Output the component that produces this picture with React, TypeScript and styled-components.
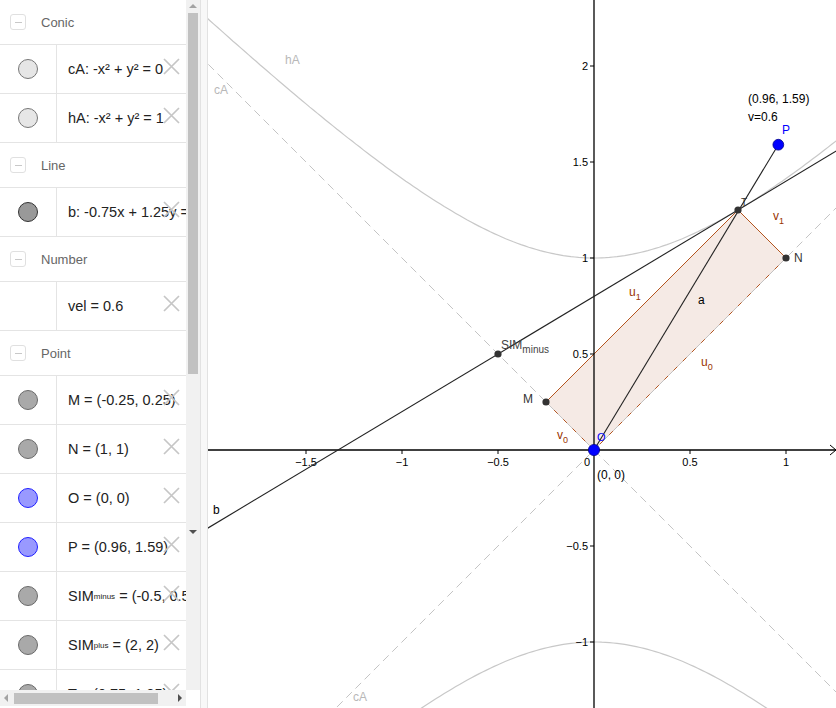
import React from 'react';
import styled, { createGlobalStyle } from 'styled-components';

const GlobalStyle = createGlobalStyle`
  html, body { margin: 0; padding: 0; background: #fff; }
  body { font-family: "Liberation Sans", Arial, sans-serif; }
`;

const Shell = styled.div`
  display: flex;
  width: 836px;
  height: 708px;
  overflow: hidden;
  background: #fff;
`;

// algebra view: content + scrollbars as a grid
const AlgebraPanel = styled.div`
  flex: none;
  width: 200px;
  display: grid;
  grid-template-columns: 186px 14px;
  grid-template-rows: 690px 18px;
`;

const ListArea = styled.div`
  overflow: hidden;
  display: flex;
  flex-direction: column;
`;

const VScroll = styled.div`
  background: #f1f1f1;
  display: flex;
  flex-direction: column;
  align-items: center;
  padding-top: 4px;
`;

const VThumb = styled.div`
  width: 10px;
  height: 361px;
  margin-top: 5px;
  background: #c1c1c1;
`;

const VSpacer = styled.div`
  flex: 1;
`;

const HScroll = styled.div`
  background: #f1f1f1;
  display: flex;
  align-items: center;
  padding: 0 4px;
  height: 16px;
`;

const HThumb = styled.div`
  width: 144px;
  height: 11px;
  margin-left: 6px;
  background: #c1c1c1;
`;

const Corner = styled.div`
  background: #fff;
`;

const Arrow = styled.div<{ dir: 'up' | 'down' | 'left' | 'right' }>`
  width: 0;
  height: 0;
  border-style: solid;
  border-color: transparent;
  ${({ dir }) =>
    dir === 'up'
      ? 'border-width: 0 4px 4px 4px; border-bottom-color: #a3a3a3;'
      : dir === 'down'
      ? 'border-width: 4px 4px 0 4px; border-top-color: #505050;'
      : dir === 'left'
      ? 'border-width: 4px 4px 4px 0; border-right-color: #a3a3a3;'
      : 'border-width: 4px 0 4px 4px; border-left-color: #505050;'}
`;

const Divider = styled.div`
  flex: none;
  width: 6px;
  background: #f8f8f8;
  border-left: 1px solid #e2e2e2;
  border-right: 1px solid #e2e2e2;
`;

const GraphView = styled.div`
  flex: 1;
  height: 708px;
  overflow: hidden;
`;

const SectionHeader = styled.div`
  flex: none;
  height: 44px;
  display: flex;
  align-items: center;
  border-bottom: 1px solid #e4e4e4;
  font-size: 13px;
  color: #666;
`;

const Collapse = styled.div`
  width: 14px;
  height: 14px;
  margin: 0 15px 0 10px;
  border: 1px solid #e0e0e0;
  border-radius: 3px;
  display: flex;
  align-items: center;
  justify-content: center;
  &::after {
    content: '';
    width: 7px;
    height: 1px;
    background: #c8c8c8;
  }
`;

const Row = styled.div`
  position: relative;
  flex: none;
  height: 48px;
  display: flex;
  border-bottom: 1px solid #e4e4e4;
`;

const Marble = styled.div`
  flex: none;
  width: 56px;
  border-right: 1px solid #e4e4e4;
  display: flex;
  align-items: center;
  justify-content: center;
`;

const Dot = styled.span<{ fill: string; edge: string }>`
  width: 18px;
  height: 18px;
  border-radius: 50%;
  background: ${({ fill }) => fill};
  border: 1px solid ${({ edge }) => edge};
`;

const Formula = styled.div`
  flex: 1;
  padding-left: 11px;
  display: flex;
  align-items: center;
  white-space: nowrap;
  font-size: 14.5px;
  color: #222;
  overflow: hidden;
`;

const Sub = styled.sub`
  font-size: 8px;
  vertical-align: -3px;
`;

const CloseBtn = styled.svg`
  position: absolute;
  right: 6px;
  top: 13px;
  width: 17px;
  height: 17px;
`;

const Close = () => (
  <CloseBtn viewBox="0 0 17 17">
    <path d="M1 1 L16 16 M16 1 L1 16" stroke="#c6c6c6" strokeWidth="1.7" fill="none" />
  </CloseBtn>
);

type Item = {
  kind: 'header';
  title: string;
} | {
  kind: 'row';
  dot?: { fill: string; edge: string };
  text: React.ReactNode;
};

const gray = { fill: '#a9a9a9', edge: '#6a6a6a' };
const blue = { fill: '#9999ff', edge: '#2020ff' };

const items: Item[] = [
  { kind: 'header', title: 'Conic' },
  { kind: 'row', dot: { fill: '#e6e6e6', edge: '#777' }, text: 'cA: -x² + y² = 0' },
  { kind: 'row', dot: { fill: '#e6e6e6', edge: '#777' }, text: 'hA: -x² + y² = 1' },
  { kind: 'header', title: 'Line' },
  { kind: 'row', dot: { fill: '#999', edge: '#333' }, text: 'b: -0.75x + 1.25y = 1' },
  { kind: 'header', title: 'Number' },
  { kind: 'row', text: 'vel = 0.6' },
  { kind: 'header', title: 'Point' },
  { kind: 'row', dot: gray, text: 'M = (-0.25, 0.25)' },
  { kind: 'row', dot: gray, text: 'N = (1, 1)' },
  { kind: 'row', dot: blue, text: 'O = (0, 0)' },
  { kind: 'row', dot: blue, text: 'P = (0.96, 1.59)' },
  { kind: 'row', dot: gray, text: <>SIM<Sub>minus</Sub>&nbsp;= (-0.5, 0.5)</> },
  { kind: 'row', dot: gray, text: <>SIM<Sub>plus</Sub>&nbsp;= (2, 2)</> },
  { kind: 'row', dot: gray, text: 'T = (0.75, 1.25)' },
];

// world -> page coordinates
const S = 192;
const X = (x: number) => 593 + S * x;
const Y = (y: number) => 450 - S * y;

const hyperbola = (sign: number) => {
  const pts: string[] = [];
  for (let x = -2.2; x <= 1.5; x += 0.02) {
    const y = sign * Math.sqrt(1 + x * x);
    pts.push(`${X(x).toFixed(1)},${Y(y).toFixed(1)}`);
  }
  return 'M' + pts.join(' L');
};

const line = (f: (x: number) => number, x0 = -2.2, x1 = 1.5) =>
  `M${X(x0)},${Y(f(x0))} L${X(x1)},${Y(f(x1))}`;

const Graph = () => {
  const O = [0, 0], M = [-0.25, 0.25], N = [1, 1], T = [0.75, 1.25], P = [0.96, 1.59], SIM = [-0.5, 0.5];
  const xt = [-1.5, -1, -0.5, 0.5, 1];
  const yt = [-1, -0.5, 0.5, 1, 1.5, 2];
  const fmt = (v: number) => (v < 0 ? '\u2212' + String(-v) : String(v));
  const brown = '#993300';
  return (
    <svg width="629" height="708" viewBox="207 0 629 708" style={{ display: 'block' }}>
      <g fontFamily='"Liberation Sans", Arial, sans-serif'>
        {/* rectangle */}
        <polygon
          points={[O, N, T, M].map(p => `${X(p[0])},${Y(p[1])}`).join(' ')}
          fill="rgba(153,51,0,0.1)"
          stroke="#b4551f"
          strokeWidth="1"
        />
        {/* asymptotes cA */}
        <path d={line(x => x)} stroke="#c4c4c4" strokeWidth="1" strokeDasharray="8 5" fill="none" />
        <path d={line(x => -x)} stroke="#c4c4c4" strokeWidth="1" strokeDasharray="8 5" fill="none" />
        {/* hyperbola hA */}
        <path d={hyperbola(1)} stroke="#c8c8c8" strokeWidth="1.2" fill="none" />
        <path d={hyperbola(-1)} stroke="#c8c8c8" strokeWidth="1.2" fill="none" />
        {/* axes */}
        <line x1="207" y1="450" x2="836" y2="450" stroke="#000" strokeWidth="1.3" />
        <line x1="593" y1="0" x2="593" y2="708" stroke="#000" strokeWidth="1.3" />
        <path d="M829,445 L835,450 L829,455" stroke="#000" strokeWidth="1" fill="none" />
        {xt.map(v => (
          <g key={'x' + v}>
            <line x1={X(v)} y1="450" x2={X(v)} y2="454" stroke="#000" strokeWidth="1" />
            <text x={X(v)} y="466" fontSize="11" textAnchor="middle" fill="#000">{fmt(v)}</text>
          </g>
        ))}
        <text x="589" y="466" fontSize="11" textAnchor="end" fill="#000">0</text>
        {yt.map(v => (
          <g key={'y' + v}>
            <line x1="589" y1={Y(v)} x2="593" y2={Y(v)} stroke="#000" strokeWidth="1" />
            <text x="587" y={Y(v) + 4} fontSize="11" textAnchor="end" fill="#000">{fmt(v)}</text>
          </g>
        ))}
        {/* line b */}
        <path d={line(x => 0.8 + 0.6 * x)} stroke="#222" strokeWidth="1.1" fill="none" />
        {/* segment a */}
        <line x1={X(0)} y1={Y(0)} x2={X(P[0])} y2={Y(P[1])} stroke="#222" strokeWidth="1.1" />
        {/* conic labels */}
        <text x="284" y="64" fontSize="12" fill="#b8b8b8">hA</text>
        <text x="213" y="94" fontSize="12" fill="#b8b8b8">cA</text>
        <text x="352" y="701" fontSize="12" fill="#b8b8b8">cA</text>
        <text x="212" y="514" fontSize="12" fill="#000">b</text>
        <text x="697" y="304" fontSize="12" fill="#000">a</text>
        {/* vector labels */}
        <text x="628" y="296" fontSize="12" fill={brown}>u<tspan fontSize="9" dy="4">1</tspan></text>
        <text x="700" y="366" fontSize="12" fill={brown}>u<tspan fontSize="9" dy="4">0</tspan></text>
        <text x="556" y="439" fontSize="12" fill={brown}>v<tspan fontSize="9" dy="4">0</tspan></text>
        <text x="772" y="220" fontSize="12" fill={brown}>v<tspan fontSize="9" dy="4">1</tspan></text>
        {/* points */}
        {[M, N, T, SIM].map((p, i) => (
          <circle key={i} cx={X(p[0])} cy={Y(p[1])} r="3.6" fill="#333" />
        ))}
        <circle cx={X(P[0])} cy={Y(P[1])} r="5.4" fill="#0000ff" stroke="#00008a" strokeWidth="0.8" />
        <circle cx={X(0)} cy={Y(0)} r="5.6" fill="#0000ff" stroke="#00008a" strokeWidth="0.8" />
        <text x="522" y="403" fontSize="12" fill="#333">M</text>
        <text x="793" y="262" fontSize="12" fill="#333">N</text>
        <text x="740" y="206" fontSize="10" fill="#333">T</text>
        <text x="500" y="349" fontSize="12" fill="#444">SIM<tspan fontSize="10" dy="4">minus</tspan></text>
        <text x="781" y="134" fontSize="12" fill="#0000ff">P</text>
        <text x="596" y="441" fontSize="11" fill="#0000ff">O</text>
        <text x="596" y="479" fontSize="12" fill="#000">(0, 0)</text>
        <text x="747" y="103" fontSize="12" fill="#000">(0.96, 1.59)</text>
        <text x="747" y="121" fontSize="12" fill="#000">v=0.6</text>
      </g>
    </svg>
  );
};

const App = () => (
  <>
    <GlobalStyle />
    <Shell>
      <AlgebraPanel>
        <ListArea>
          {items.map((it, i) =>
            it.kind === 'header' ? (
              <SectionHeader key={i}>
                <Collapse />
                {it.title}
              </SectionHeader>
            ) : (
              <Row key={i}>
                <Marble>{it.dot && <Dot fill={it.dot.fill} edge={it.dot.edge} />}</Marble>
                <Formula>{it.text}</Formula>
                <Close />
              </Row>
            )
          )}
        </ListArea>
        <VScroll>
          <Arrow dir="up" />
          <VThumb />
          <VSpacer />
          <Arrow dir="down" />
          <VSpacer />
        </VScroll>
        <HScroll>
          <Arrow dir="left" />
          <HThumb />
          <VSpacer />
          <Arrow dir="right" />
        </HScroll>
        <Corner />
      </AlgebraPanel>
      <Divider />
      <GraphView>
        <Graph />
      </GraphView>
    </Shell>
  </>
);

export default App;
